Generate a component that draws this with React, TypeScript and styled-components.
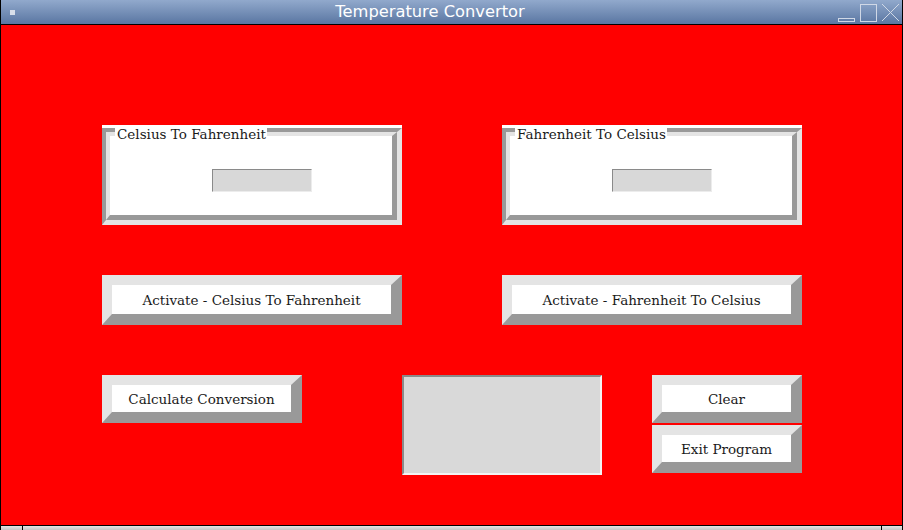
import React from 'react';
import styled, { createGlobalStyle } from 'styled-components';

const Global = createGlobalStyle`
  html, body { margin: 0; padding: 0; width: 903px; height: 530px; overflow: hidden; background: #000; }
  #root { width: 903px; height: 530px; }
`;

const Window = styled.div`
  width: 903px;
  height: 530px;
  box-sizing: border-box;
  border-left: 1px solid #000;
  border-right: 1px solid #000;
  display: flex;
  flex-direction: column;
  font-family: "DejaVu Serif", serif;
`;

const TitleBar = styled.div`
  flex: none;
  height: 24px;
  border-bottom: 1px solid #000;
  background: linear-gradient(#91a9cc, #5a76a2);
  display: flex;
  align-items: center;
`;

const TitleIconArea = styled.div`
  width: 23px;
  height: 24px;
  box-sizing: border-box;
  padding: 10px 0 0 9px;
`;

const TitleIcon = styled.div`
  width: 5px;
  height: 5px;
  background: #d8dfea;
`;

const TitleText = styled.div`
  flex: 1;
  text-align: center;
  color: #fff;
  font: 16.3px/24px "DejaVu Sans", sans-serif;
`;

const WinButtons = styled.svg`
  flex: none;
  display: block;
`;

const Content = styled.div`
  flex: 1;
  background: #ff0000;
  padding: 100px 0 0 101px;
  display: flex;
  flex-direction: column;
  gap: 50px;
`;

const Row = styled.div<{ $gap: number }>`
  display: flex;
  align-items: flex-start;
  gap: ${p => p.$gap}px;
`;

const Group = styled.div`
  position: relative;
  width: 300px;
  height: 100px;
  box-sizing: border-box;
  background: #fff;
  padding-top: 3px;
  display: flex;
`;

const FrameOuter = styled.div`
  flex: 1;
  display: flex;
  border-style: solid;
  border-width: 4px 5px 5px 4px;
  border-color: #999 #e4e4e4 #e4e4e4 #999;
`;

const FrameInner = styled.div`
  flex: 1;
  border-style: solid;
  border-width: 4px 5px 5px 4px;
  border-color: #e4e4e4 #999 #999 #e4e4e4;
  background: #fff;
  padding: 33px 0 0 102px;
`;

const GroupTitle = styled.div`
  position: absolute;
  top: 0;
  left: 13px;
  padding: 2px 1px 0 2px;
  background: #fff;
  font: 13.5px/15px "DejaVu Serif", serif;
  color: #1a1a1a;
  white-space: nowrap;
`;

const Field = styled.input`
  display: block;
  width: 100px;
  height: 23px;
  box-sizing: border-box;
  margin: 0;
  padding: 0 3px;
  background: #d8d8d8;
  border-style: solid;
  border-width: 1px;
  border-color: #8a8a8a #ececec #ececec #8a8a8a;
  outline: none;
  font: 13px "DejaVu Serif", serif;
`;

const Bevel = styled.button<{ $w: number; $h: number }>`
  display: flex;
  align-items: center;
  justify-content: center;
  width: ${p => p.$w}px;
  height: ${p => p.$h}px;
  box-sizing: border-box;
  margin: 0;
  padding: 0;
  border-style: solid;
  border-width: 10px 11px 11px 10px;
  border-color: #e4e4e4 #999 #999 #e4e4e4;
  background: #fff;
  font: 13.5px "DejaVu Serif", serif;
  color: #1a1a1a;
  outline: none;
  cursor: default;
`;

const Display = styled.div`
  width: 200px;
  height: 100px;
  box-sizing: border-box;
  margin-left: 50px;
  background: #d9d9d9;
  border-style: solid;
  border-width: 2px;
  border-color: #8a8a8a #f4f4f4 #f4f4f4 #8a8a8a;
`;

const Stack = styled.div`
  display: flex;
  flex-direction: column;
  gap: 2px;
`;

const BottomBar = styled.div`
  flex: none;
  height: 4px;
  border-top: 1px solid #000;
  background: linear-gradient(#e4e4e4, #c4c4c4);
  display: flex;
`;

const Grip = styled.div<{ $side: 'left' | 'right'; $w: number }>`
  width: ${p => p.$w}px;
  box-sizing: content-box;
  ${p => (p.$side === 'left' ? 'border-right: 1px solid #000;' : 'border-left: 1px solid #000;')}
`;

const GripMid = styled.div`
  flex: 1;
`;

const TempGroup: React.FC<{ title: string }> = ({ title }) => (
  <Group>
    <FrameOuter>
      <FrameInner>
        <Field readOnly value="" />
      </FrameInner>
    </FrameOuter>
    <GroupTitle>{title}</GroupTitle>
  </Group>
);

export default function App() {
  return (
    <>
      <Global />
      <Window>
        <TitleBar>
          <TitleIconArea>
            <TitleIcon />
          </TitleIconArea>
          <TitleText>Temperature Convertor</TitleText>
          <WinButtons width="66" height="24" viewBox="0 0 66 24">
            <rect x="2.5" y="18.5" width="16" height="3" fill="none" stroke="#d0d8e6" />
            <rect x="24.5" y="4.5" width="16" height="17" fill="none" stroke="#d0d8e6" />
            <path d="M46 4 L63 21 M63 4 L46 21" stroke="#d0d8e6" strokeWidth="1" fill="none" />
          </WinButtons>
        </TitleBar>
        <Content>
          <Row $gap={100}>
            <TempGroup title="Celsius To Fahrenheit" />
            <TempGroup title="Fahrenheit To Celsius" />
          </Row>
          <Row $gap={100}>
            <Bevel $w={300} $h={50}>Activate - Celsius To Fahrenheit</Bevel>
            <Bevel $w={300} $h={50}>Activate - Fahrenheit To Celsius</Bevel>
          </Row>
          <Row $gap={50}>
            <Bevel $w={200} $h={48}>Calculate Conversion</Bevel>
            <Display />
            <Stack>
              <Bevel $w={150} $h={48}>Clear</Bevel>
              <Bevel $w={150} $h={48}>Exit Program</Bevel>
            </Stack>
          </Row>
        </Content>
        <BottomBar>
          <Grip $side="left" $w={21} />
          <GripMid />
          <Grip $side="right" $w={20} />
        </BottomBar>
      </Window>
    </>
  );
}
